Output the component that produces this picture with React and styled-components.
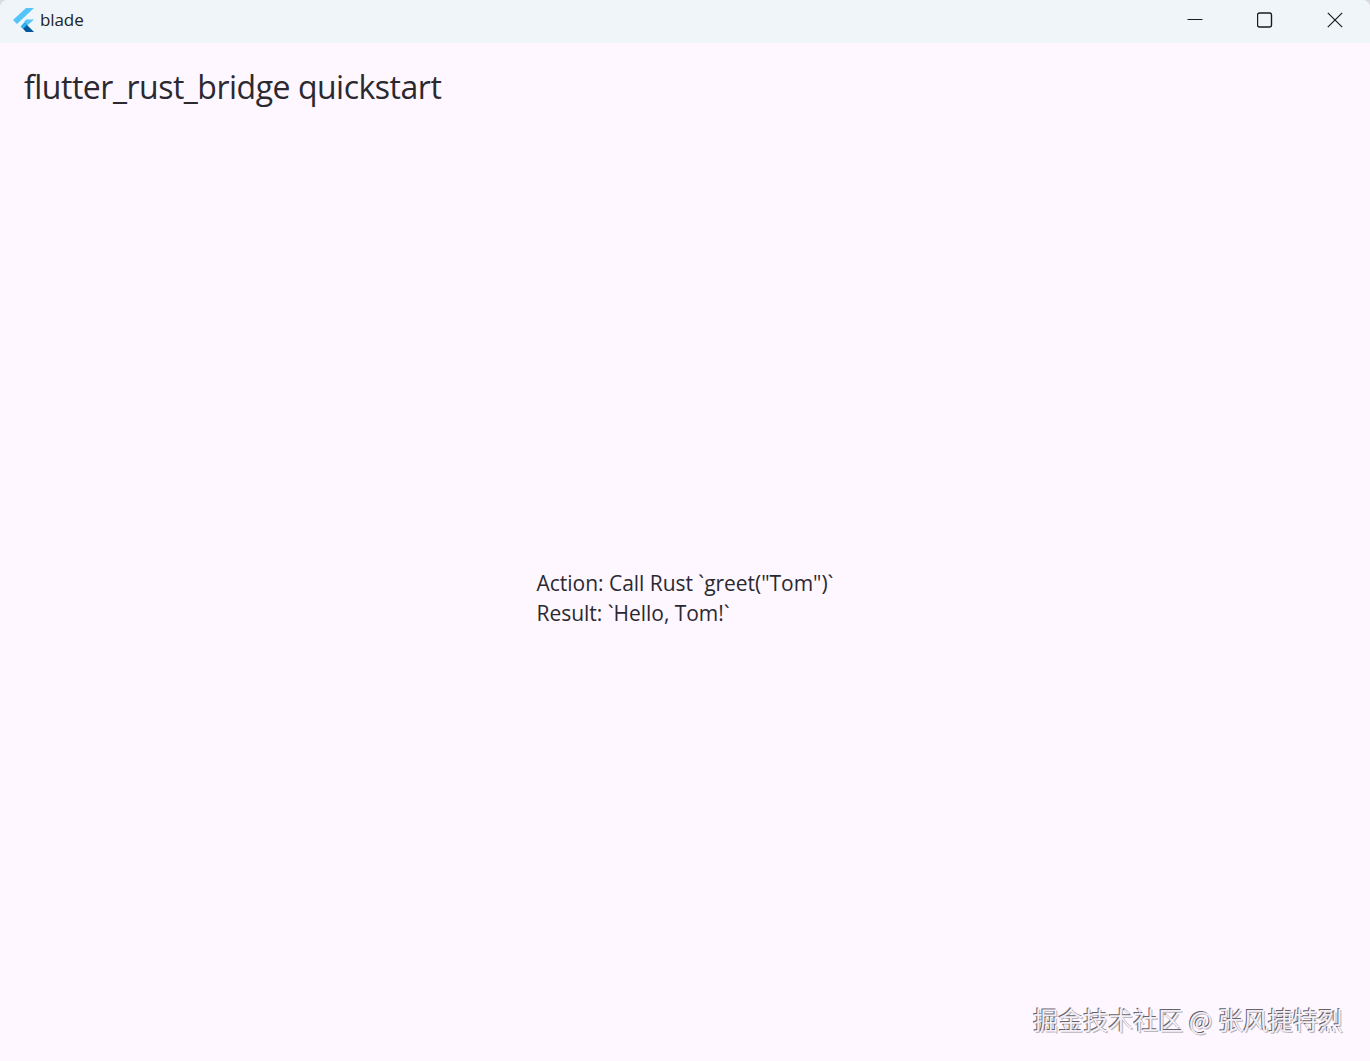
import React from "react";
import styled, { createGlobalStyle } from "styled-components";

const Global = createGlobalStyle`
  html, body { margin: 0; padding: 0; background: #d9dcde; }
  #root { height: 1061px; }
`;

const Win = styled.div`
  position: relative;
  width: 1370px;
  height: 1061px;
  display: flex;
  flex-direction: column;
  background: #fef7ff;
  border-radius: 8px 8px 0 0;
  overflow: hidden;
  font-family: "Open Sans", "Noto Sans", sans-serif;
  color: #2b2930;
`;

const TitleBar = styled.header`
  height: 43px;
  box-sizing: border-box;
  flex: none;
  display: flex;
  align-items: center;
  background: #eff5f9;
  padding: 0 0 3px 13px;
`;

const AppName = styled.span`
  margin-left: 6px;
  padding-bottom: 2px;
  font-size: 17px;
  letter-spacing: -0.1px;
  color: #222;
`;

const Controls = styled.div`
  margin-left: auto;
  display: flex;
  height: 100%;
`;

const Control = styled.div`
  width: 70px;
  height: 100%;
  display: flex;
  align-items: center;
  justify-content: center;
`;

const AppBar = styled.div`
  height: 88px;
  flex: none;
  display: flex;
  align-items: center;
  padding-left: 24px;
`;

const Heading = styled.h1`
  margin: 0;
  font-size: 32px;
  font-weight: 400;
  line-height: 40px;
  letter-spacing: -0.49px;
`;

const Body = styled.main`
  flex: 1;
  display: flex;
  align-items: center;
  justify-content: center;
  padding-top: 4px;
`;

const Column = styled.div`
  display: flex;
  flex-direction: column;
`;

const Line = styled.div`
  font-size: 21px;
  line-height: 30px;
  letter-spacing: -0.03px;
  white-space: nowrap;
`;

const Watermark = styled.div`
  position: absolute;
  right: 27px;
  bottom: 26px;
  font-family: "Noto Sans CJK SC", sans-serif;
  font-size: 25px;
  line-height: 32px;
  color: #f4eef6;
  text-shadow: -1px -1px 0 #66636a, 1px 1px 0 #b9b6bc;
  white-space: nowrap;
`;

const FlutterLogo = () => (
  <svg width="21" height="24" viewBox="0 0 21 24" aria-hidden="true">
    <path d="M0 12 L13 0 H21 L4 16 Z" fill="#54c5f8" />
    <path d="M7.5 19 L13 11.5 H21 L12 19.5 Z" fill="#54c5f8" />
    <path d="M8 18.5 L12 15 L21 24 H13 Z" fill="#01579b" />
    <path d="M8 18.5 L12 15 L14 17 L10.3 20.8 Z" fill="#29b6f6" />
  </svg>
);

export default function App() {
  return (
    <Win>
      <Global />
      <TitleBar>
        <FlutterLogo />
        <AppName>blade</AppName>
        <Controls>
          <Control>
            <svg width="16" height="16" viewBox="0 0 16 16" fill="none" stroke="#1b1b1b" strokeWidth="1">
              <path d="M0.5 7.5 H15.5" />
            </svg>
          </Control>
          <Control>
            <svg width="16" height="16" viewBox="0 0 16 16" fill="none" stroke="#1b1b1b" strokeWidth="1.4">
              <rect x="0.5" y="1" width="14" height="14" rx="2" />
            </svg>
          </Control>
          <Control>
            <svg width="16" height="16" viewBox="0 0 16 16" fill="none" stroke="#1b1b1b" strokeWidth="1.2">
              <path d="M0.8 0.8 L15.2 15.2 M15.2 0.8 L0.8 15.2" />
            </svg>
          </Control>
        </Controls>
      </TitleBar>
      <AppBar>
        <Heading>flutter_rust_bridge quickstart</Heading>
      </AppBar>
      <Body>
        <Column>
          <Line>Action: Call Rust `greet("Tom")`</Line>
          <Line>Result: `Hello, Tom!`</Line>
        </Column>
      </Body>
      <Watermark>掘金技术社区 @ 张风捷特烈</Watermark>
    </Win>
  );
}
